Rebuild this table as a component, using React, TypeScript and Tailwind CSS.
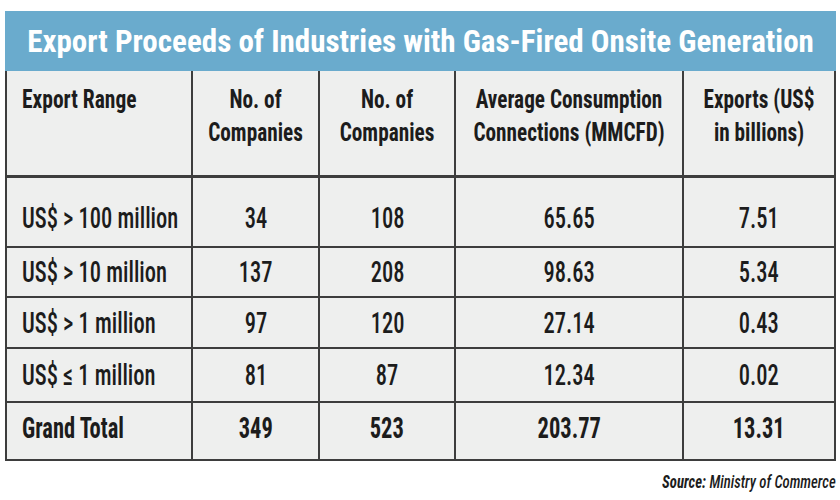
import React from "react";

const rows = [
  ["US$ > 100 million", "34", "108", "65.65", "7.51"],
  ["US$ > 10 million", "137", "208", "98.63", "5.34"],
  ["US$ > 1 million", "97", "120", "27.14", "0.43"],
  ["US$ ≤ 1 million", "81", "87", "12.34", "0.02"],
];

const rowH = ["h-[70px] pt-[11px]", "h-[50px]", "h-[51px]", "h-[54px]", "h-[58px] pb-[7px]"];

function Cell({
  children,
  first,
  extra,
}: {
  children: React.ReactNode;
  first?: boolean;
  extra: string;
}) {
  return (
    <div
      className={
        "flex items-center bg-[#eeefee] border-b-2 border-r-2 border-[#3d3d3d] " +
        extra +
        (first ? " justify-start pl-[15px]" : " justify-center")
      }
    >
      {children}
    </div>
  );
}

export default function App() {
  const font = "font-['Roboto','Liberation_Sans',sans-serif] [font-stretch:75%]";
  return (
    <div className={"w-[840px] h-[500px] bg-white pt-[11px] pl-[5px] " + font}>
      <div className="w-[831px]">
        <div className="h-[60px] bg-[#6aabcd] flex items-center justify-center overflow-hidden">
          <span className="inline-block whitespace-nowrap text-[32px] font-bold text-white scale-x-[0.97] leading-none">
            Export Proceeds of Industries with Gas-Fired Onsite Generation
          </span>
        </div>
        <div className="grid grid-cols-[186px_127px_136px_228px_152px] border-l-2 border-[#3d3d3d] text-[#1c1c1c]">
          <div className="h-[107px] bg-[#eeefee] border-b-[3px] border-r-2 border-[#3d3d3d] pt-[12px] pl-[15px]">
            <div className="text-[25px] leading-[33px] font-bold whitespace-nowrap scale-x-[0.86] origin-left">
              Export Range
            </div>
          </div>
          {[
            ["No. of", "Companies"],
            ["No. of", "Companies"],
            ["Average Consumption", "Connections (MMCFD)"],
            ["Exports (US$", "in billions)"],
          ].map((h, i) => (
            <div
              key={i}
              className="h-[107px] bg-[#eeefee] border-b-[3px] border-r-2 border-[#3d3d3d] pt-[12px]"
            >
              <div className="text-[25px] leading-[33px] font-bold whitespace-nowrap text-center scale-x-[0.85]">
                {h[0]}
                <br />
                {h[1]}
              </div>
            </div>
          ))}
          {rows.map((r, ri) =>
            r.map((c, ci) => (
              <Cell key={ri + "-" + ci} first={ci === 0} extra={rowH[ri]}>
                <span
                  className={
                    "inline-block whitespace-nowrap text-[30px] leading-none font-medium scale-x-[0.75] " +
                    (ci === 0 ? "origin-left" : "origin-center")
                  }
                >
                  {c}
                </span>
              </Cell>
            ))
          )}
          {["Grand Total", "349", "523", "203.77", "13.31"].map((c, ci) => (
            <Cell key={"t" + ci} first={ci === 0} extra={rowH[4]}>
              <span
                className={
                  "inline-block whitespace-nowrap text-[30px] leading-none font-bold scale-x-[0.75] " +
                  (ci === 0 ? "origin-left" : "origin-center")
                }
              >
                {c}
              </span>
            </Cell>
          ))}
        </div>
        <div className="flex justify-end pt-[12px]">
          <span className="inline-block whitespace-nowrap text-[18px] leading-none italic text-[#1c1c1c] scale-x-[0.82] origin-right">
            <span className="font-bold">Source:</span> <span className="font-medium">Ministry of Commerce</span>
          </span>
        </div>
      </div>
    </div>
  );
}
